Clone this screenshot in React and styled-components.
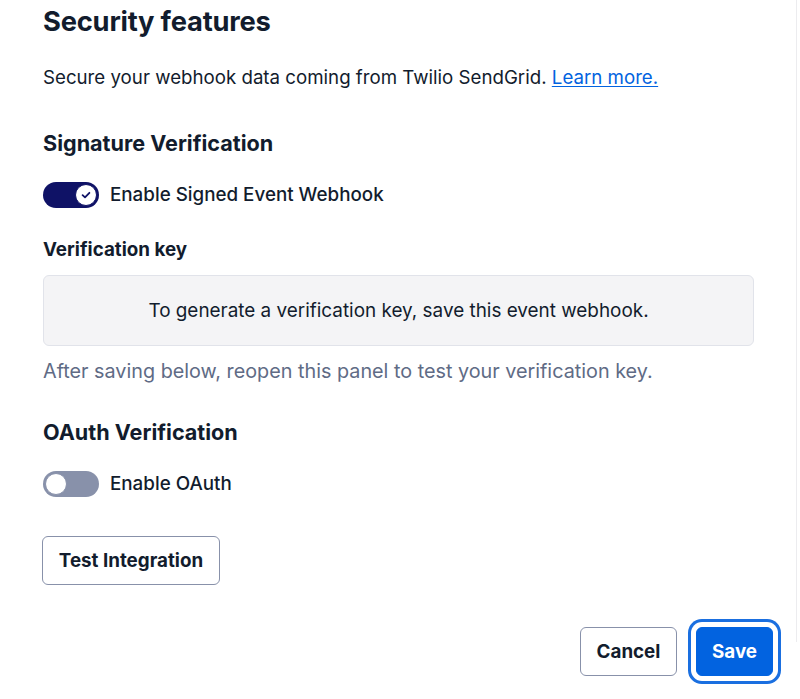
import React from "react";
import styled, { createGlobalStyle } from "styled-components";

const Global = createGlobalStyle`
  html, body { margin: 0; padding: 0; background: #fff; }
  body { font-family: Inter, "Noto Sans", sans-serif; color: #121c2d; }
`;

const Page = styled.div`
  width: 796px;
  min-height: 699px;
  position: relative;
  box-sizing: border-box;
`;

const Panel = styled.div`
  box-sizing: border-box;
  width: 797px;
  height: 642px;
  border-right: 1px solid #ececef;
  padding: 6px 0 0 43px;
  display: flex;
  flex-direction: column;
  align-items: flex-start;
`;

const Title = styled.h1`
  margin: 0;
  font-size: 27.3px;
  line-height: 32px;
  font-weight: 700;
  letter-spacing: -0.2px;
`;

const Text = styled.p`
  margin: ${(p) => p.$mt || 0}px 0 0;
  font-size: ${(p) => (p.$muted ? "19.8px" : "18.7px")};
  line-height: 28px;
  color: ${(p) => (p.$muted ? "#606b85" : "#121c2d")};
`;

const Link = styled.a`
  color: #0263e0;
  text-decoration: underline;
  text-underline-offset: 2px;
`;

const SubHeading = styled.h2`
  margin: ${(p) => p.$mt}px 0 0;
  font-size: 21.6px;
  line-height: 28px;
  font-weight: 700;
`;

const Label = styled.div`
  margin-top: 29px;
  font-size: 18.8px;
  line-height: 26px;
  font-weight: 700;
`;

const SwitchRow = styled.label`
  margin-top: 25px;
  display: flex;
  align-items: center;
  gap: 11px;
  font-size: 18.8px;
  line-height: 26px;
  font-weight: 500;
`;

const Track = styled.span`
  width: 56px;
  height: 26px;
  border-radius: 13px;
  background: ${(p) => (p.$on ? "#0f1266" : "#8891aa")};
  position: relative;
  flex: none;
`;

const Knob = styled.span`
  position: absolute;
  top: 2px;
  left: ${(p) => (p.$on ? "32px" : "2px")};
  width: 22px;
  height: 22px;
  box-sizing: border-box;
  border-radius: 50%;
  background: #fff;
  border: ${(p) => (p.$on ? "1.5px solid #0f1266" : "1.5px solid #8891aa")};
  display: flex;
  align-items: center;
  justify-content: center;
`;

const KeyBox = styled.div`
  margin-top: 12px;
  box-sizing: border-box;
  width: 711px;
  height: 71px;
  background: #f4f4f6;
  border: 1px solid #e1e3ea;
  border-radius: 6px;
  display: flex;
  align-items: center;
  justify-content: center;
  font-size: 18.9px;
  color: #121c2d;
`;

const Button = styled.button`
  box-sizing: border-box;
  height: 49px;
  padding: 0;
  border-radius: 6px;
  font-family: inherit;
  font-size: 18.8px;
  font-weight: 700;
  cursor: pointer;
  background: ${(p) => (p.$primary ? "#0263e0" : "#fff")};
  color: ${(p) => (p.$primary ? "#fff" : "#121c2d")};
  border: 1px solid ${(p) => (p.$primary ? "#0263e0" : "#8891aa")};
  box-shadow: ${(p) => (p.$focus ? "0 0 0 5px #fff, 0 0 0 8px #1a6fe0" : "none")};
  width: ${(p) => p.$w}px;
`;

const TestButton = styled(Button)`
  margin-top: 39px;
  margin-left: -1px;
`;

const Footer = styled.div`
  position: absolute;
  right: 23px;
  top: 627px;
  display: flex;
  gap: 19px;
`;

const Check = () => (
  <svg width="12" height="12" viewBox="0 0 12 12" fill="none">
    <path d="M2.6 6.2 L5 8.4 L9.4 3.8" stroke="#0f1266" strokeWidth="1.8" strokeLinecap="round" strokeLinejoin="round" />
  </svg>
);

export default function App() {
  return (
    <Page>
      <Global />
      <Panel>
        <Title>Security features</Title>
        <Text $mt={26}>
          Secure your webhook data coming from Twilio SendGrid. <Link href="#">Learn more.</Link>
        </Text>
        <SubHeading $mt={37}>Signature Verification</SubHeading>
        <SwitchRow>
          <Track $on>
            <Knob $on>
              <Check />
            </Knob>
          </Track>
          Enable Signed Event Webhook
        </SwitchRow>
        <Label>Verification key</Label>
        <KeyBox>To generate a verification key, save this event webhook.</KeyBox>
        <Text $mt={11} $muted>
          After saving below, reopen this panel to test your verification key.
        </Text>
        <SubHeading $mt={33}>OAuth Verification</SubHeading>
        <SwitchRow>
          <Track>
            <Knob />
          </Track>
          Enable OAuth
        </SwitchRow>
        <TestButton $w={178}>Test Integration</TestButton>
      </Panel>
      <Footer>
        <Button $w={97}>Cancel</Button>
        <Button $primary $focus $w={77}>Save</Button>
      </Footer>
    </Page>
  );
}
